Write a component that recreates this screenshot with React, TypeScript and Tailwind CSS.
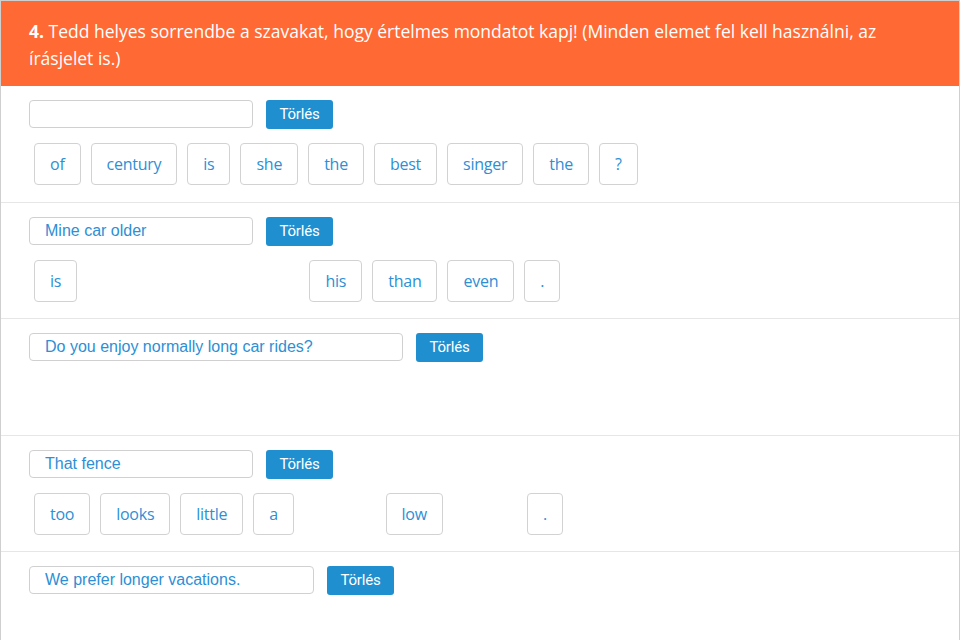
import React from "react";

type Chip = { text: string; used?: boolean };

type Row = {
  answer: string;
  inputWidth: string;
  chips: Chip[];
};

const rows: Row[] = [
  {
    answer: "",
    inputWidth: "w-[224px]",
    chips: [
      { text: "of" },
      { text: "century" },
      { text: "is" },
      { text: "she" },
      { text: "the" },
      { text: "best" },
      { text: "singer" },
      { text: "the" },
      { text: "?" },
    ],
  },
  {
    answer: "Mine car older",
    inputWidth: "w-[224px]",
    chips: [
      { text: "is" },
      { text: "Mine", used: true },
      { text: "car", used: true },
      { text: "older", used: true },
      { text: "his" },
      { text: "than" },
      { text: "even" },
      { text: "." },
    ],
  },
  {
    answer: "Do you enjoy normally long car rides?",
    inputWidth: "w-[374px]",
    chips: [
      { text: "Do", used: true },
      { text: "you", used: true },
      { text: "enjoy", used: true },
      { text: "normally", used: true },
      { text: "long", used: true },
      { text: "car", used: true },
      { text: "rides", used: true },
      { text: "?", used: true },
    ],
  },
  {
    answer: "That fence",
    inputWidth: "w-[224px]",
    chips: [
      { text: "too" },
      { text: "looks" },
      { text: "little" },
      { text: "a" },
      { text: "fence", used: true },
      { text: "low" },
      { text: "That", used: true },
      { text: "." },
    ],
  },
  {
    answer: "We prefer longer vacations.",
    inputWidth: "w-[285px]",
    chips: [
      { text: "We", used: true },
      { text: "prefer", used: true },
      { text: "longer", used: true },
      { text: "vacations", used: true },
      { text: ".", used: true },
    ],
  },
];

function WordRow({ row }: { row: Row }) {
  return (
    <div className="border-b border-[#e6e6e6] pl-[28px] pt-[14px] pb-[16.5px]">
      <div className="flex items-start gap-[13px]">
        <div
          className={`${row.inputWidth} h-[28px] rounded-[4px] border border-[#d0d0d0] bg-white pl-[15px] flex items-center text-[16px] text-[#2d8fd5] font-['Liberation_Sans',Arial,sans-serif] whitespace-nowrap overflow-hidden`}
        >
          {row.answer}
        </div>
        <button className="w-[67px] h-[29px] rounded-[3px] bg-[#1f8fd0] text-white text-[15px] font-normal tracking-[-0.2px] font-['Liberation_Sans_Narrow',Roboto,sans-serif]">
          Törlés
        </button>
      </div>
      <div className="mt-[14px] ml-[5px] flex flex-wrap gap-[10px] h-[42px]">
        {row.chips.map((chip, i) => (
          <span
            key={i}
            className={`h-[42px] px-[15px] flex items-center rounded-[4px] border border-[#d2d2d2] bg-white text-[16px] tracking-[-0.25px] text-[#2d8fd5] font-['Open_Sans',sans-serif] ${
              chip.used ? "invisible" : ""
            }`}
          >
            {chip.text}
          </span>
        ))}
      </div>
    </div>
  );
}

export default function App() {
  return (
    <div className="min-h-[640px] bg-white border border-b-0 border-[#cfcfcf]">
      <div className="bg-[#ff6934] h-[85px] pl-[28px] pr-[40px] pt-[17px] text-white text-[17.5px] leading-[27px] font-['Open_Sans',sans-serif]">
        <span className="font-bold">4.</span> Tedd helyes sorrendbe a szavakat,
        hogy értelmes mondatot kapj! (Minden elemet fel kell használni, az
        írásjelet is.)
      </div>
      {rows.map((row, i) => (
        <WordRow key={i} row={row} />
      ))}
    </div>
  );
}
